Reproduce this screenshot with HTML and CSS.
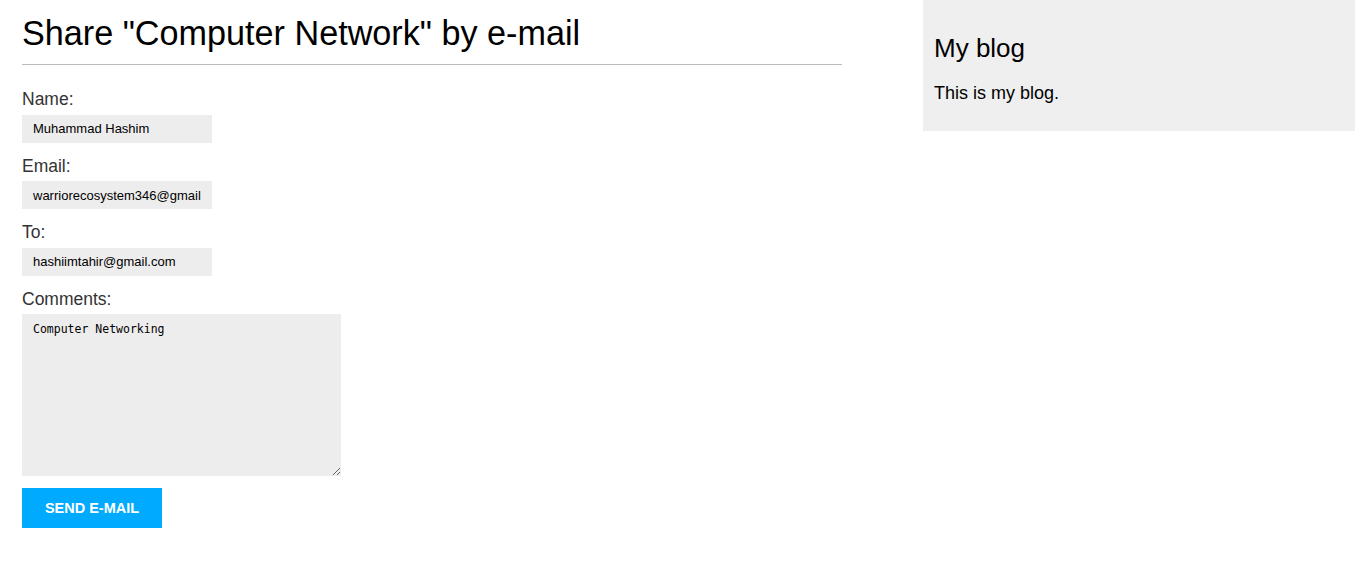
FILE: index.html
```html
<!DOCTYPE html>
<html lang="en">
<head>
<meta charset="utf-8">
<title>Share "Computer Network"</title>
<link rel="stylesheet" href="styles.css">
</head>
<body>
<div class="page">
  <main class="content">
    <h1 class="title">Share "Computer Network" by e-mail</h1>
    <form class="share-form">
      <label class="field-label" for="name">Name:</label>
      <input class="field-input" id="name" type="text" value="Muhammad Hashim">
      <label class="field-label" for="email">Email:</label>
      <input class="field-input" id="email" type="text" value="warriorecosystem346@gmail.com">
      <label class="field-label" for="to">To:</label>
      <input class="field-input" id="to" type="text" value="hashiimtahir@gmail.com">
      <label class="field-label" for="comments">Comments:</label>
      <textarea class="field-textarea" id="comments">Computer Networking</textarea>
      <button class="send-btn" type="button">Send e-mail</button>
    </form>
  </main>
  <aside class="sidebar">
    <h2 class="sidebar-title">My blog</h2>
    <p class="sidebar-text">This is my blog.</p>
  </aside>
</div>
</body>
</html>
```

FILE: styles.css
```css
html, body {
  margin: 0;
  padding: 0;
  background: #fff;
}

body {
  font-family: "Liberation Sans", Arial, Helvetica, sans-serif;
  color: #000;
}

.page {
  display: flex;
  justify-content: space-between;
  align-items: flex-start;
}

.content {
  width: 820px;
  padding-left: 22px;
}

.title {
  font-size: 34.2px;
  font-weight: normal;
  line-height: 38px;
  margin: 14px 0 0;
  padding-bottom: 12px;
  border-bottom: 1px solid #bbb;
}

.share-form {
  display: flex;
  flex-direction: column;
  align-items: flex-start;
  margin-top: 24px;
}

.field-label {
  font-size: 17.5px;
  line-height: 19.5px;
  padding-top: 1px;
  color: #333;
  margin-bottom: 5px;
}

.field-input {
  box-sizing: border-box;
  width: 190px;
  height: 28px;
  margin: 0 0 13px;
  padding: 0 11px;
  border: 0;
  background: #ededed;
  font-family: "Liberation Sans", Arial, sans-serif;
  font-size: 13px;
  color: #000;
  outline: none;
}

.field-textarea {
  box-sizing: border-box;
  width: 319px;
  height: 162px;
  margin: 0 0 12px;
  padding: 8px 11px;
  border: 0;
  background: #ededed;
  font-family: "DejaVu Sans Mono", "Liberation Mono", monospace;
  font-size: 11.5px;
  line-height: 14px;
  color: #000;
  outline: none;
}

.send-btn {
  box-sizing: border-box;
  width: 140px;
  height: 40px;
  padding: 0;
  border: 0;
  background: #00abff;
  color: #fff;
  font-family: "Liberation Sans", Arial, sans-serif;
  font-weight: bold;
  font-size: 14.5px;
  text-transform: uppercase;
}

.sidebar {
  width: 432px;
  box-sizing: border-box;
  height: 131px;
  padding: 33px 11px 0;
  background: #efefef;
}

.sidebar-title {
  font-size: 26px;
  font-weight: normal;
  line-height: 30px;
  margin: 0;
}

.sidebar-text {
  font-size: 18px;
  line-height: 21px;
  margin: 20px 0 0;
}
```
